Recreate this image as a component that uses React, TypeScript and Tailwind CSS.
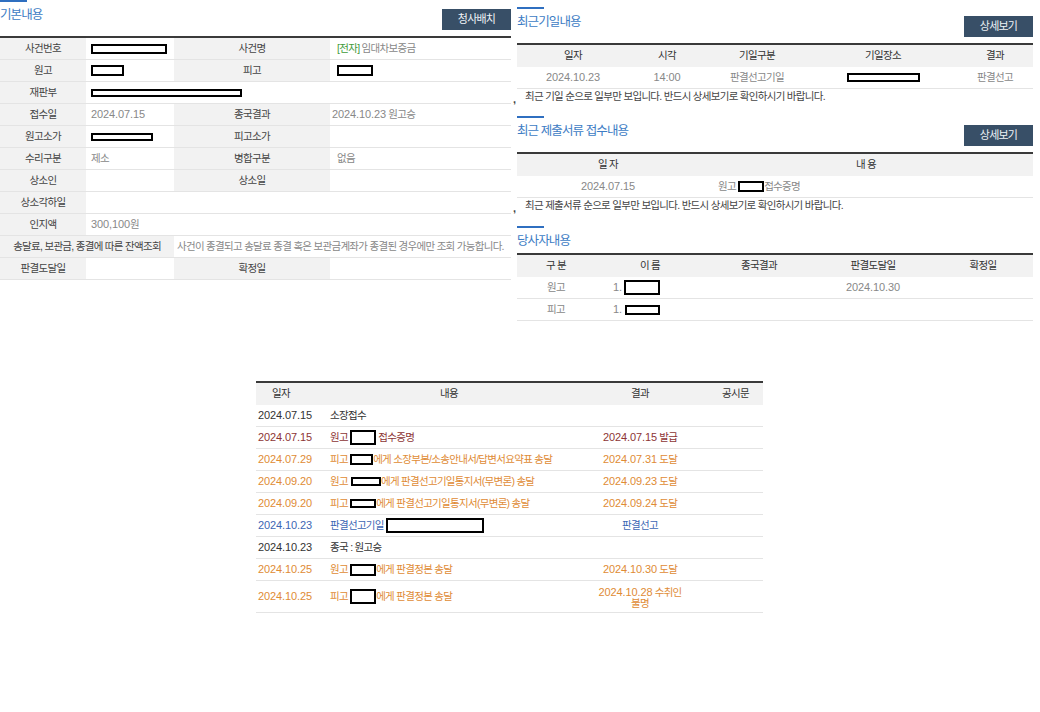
import React from 'react';

const FONT = "font-['Liberation_Sans','Noto_Sans_CJK_KR',sans-serif]";

function Num({ children }: { children: React.ReactNode }) {
  return <span className="text-[11px] tracking-[-0.1px]">{children}</span>;
}

function Redact({ className }: { className: string }) {
  return <span className={`inline-block align-middle border-2 border-black bg-white ${className}`} />;
}

function SectionHead({ title, button }: { title: string; button?: string }) {
  return (
    <div>
      <div className="w-[27px] h-[2px] bg-[#2f6fc0]" />
      <div className={`flex justify-between items-start ${button ? 'h-[34px]' : 'h-[25px]'}`}>
        <h2 className="pt-[5px] text-[12.5px] leading-[16px] tracking-[-0.9px] font-normal text-[#3d7cc4]">{title}</h2>
        {button && (
          <button className="mt-[7px] w-[69px] h-[21px] bg-[#384f67] text-[11px] tracking-[-0.8px] text-[#eef2f6]">
            {button}
          </button>
        )}
      </div>
    </div>
  );
}

function Note({ children }: { children: React.ReactNode }) {
  return (
    <div className="h-[16px] flex items-center -ml-[4px] text-[#444]">
      <span className="w-[12px] text-[11px] leading-[8px] pt-[3px] font-bold">,</span>
      <span>{children}</span>
    </div>
  );
}

const LABEL = 'bg-[#f2f2f2] flex items-center justify-center text-[#444]';
const VAL1 = 'flex items-center pl-[5px] text-[#888]';
const VAL2 = 'flex items-center pl-[7px] text-[#888]';
const ROW = 'grid grid-cols-[86px_88px_156px_181px] h-[22px] border-b border-[#e4e4e4]';

function BasicInfo() {
  return (
    <div className="w-[511px]">
      <SectionHead title="기본내용" button="청사배치" />
      <div className="border-t-2 border-[#3a3a3a]">
        <div className={ROW}>
          <div className={LABEL}>사건번호</div>
          <div className={VAL1}><Redact className="w-[76px] h-[10px]" /></div>
          <div className={LABEL}>사건명</div>
          <div className={VAL2}>
            <span className="text-[#3f9b3a]">[전자]</span>&nbsp;임대차보증금
          </div>
        </div>
        <div className={ROW}>
          <div className={LABEL}>원고</div>
          <div className={VAL1}><Redact className="w-[33px] h-[11px]" /></div>
          <div className={LABEL}>피고</div>
          <div className={VAL2}><Redact className="w-[36px] h-[11px]" /></div>
        </div>
        <div className={ROW}>
          <div className={LABEL}>재판부</div>
          <div className={`${VAL1} col-span-3`}><Redact className="w-[151px] h-[8px]" /></div>
        </div>
        <div className={ROW}>
          <div className={LABEL}>접수일</div>
          <div className={VAL1}><Num>2024.07.15</Num></div>
          <div className={LABEL}>종국결과</div>
          <div className="flex items-center pl-[2px] text-[#888]">
            <Num>2024.10.23</Num>&nbsp;원고승
          </div>
        </div>
        <div className={ROW}>
          <div className={LABEL}>원고소가</div>
          <div className={VAL1}><Redact className="w-[62px] h-[8px]" /></div>
          <div className={LABEL}>피고소가</div>
          <div className={VAL2} />
        </div>
        <div className={ROW}>
          <div className={LABEL}>수리구분</div>
          <div className={VAL1}>제소</div>
          <div className={LABEL}>병합구분</div>
          <div className={VAL2}>없음</div>
        </div>
        <div className={ROW}>
          <div className={LABEL}>상소인</div>
          <div className={VAL1} />
          <div className={LABEL}>상소일</div>
          <div className={VAL2} />
        </div>
        <div className={ROW}>
          <div className={LABEL}>상소각하일</div>
          <div className={`${VAL1} col-span-3`} />
        </div>
        <div className={ROW}>
          <div className={LABEL}>인지액</div>
          <div className={`${VAL1} col-span-3`}>
            <Num>300,100</Num>원
          </div>
        </div>
        <div className={ROW}>
          <div className={`${LABEL} col-span-2 whitespace-nowrap`}>송달료, 보관금, 종결에 따른 잔액조회</div>
          <div className="col-span-2 flex items-center pl-[3px] text-[#888] whitespace-nowrap">
            사건이 종결되고 송달료 종결 혹은 보관금계좌가 종결된 경우에만 조회 가능합니다.
          </div>
        </div>
        <div className={ROW}>
          <div className={LABEL}>판결도달일</div>
          <div className={VAL1} />
          <div className={LABEL}>확정일</div>
          <div className={VAL2} />
        </div>
      </div>
    </div>
  );
}

const HEAD = 'bg-[#f2f2f2] h-[22px] text-[#333]';
const LINE = 'h-[22px] border-b border-[#e4e4e4] text-[#888]';

function RecentDates() {
  const cols = 'grid grid-cols-[112px_76px_104px_148px_76px]';
  return (
    <div>
      <SectionHead title="최근기일내용" button="상세보기" />
      <div className="border-t-2 border-[#3a3a3a]">
        <div className={`${cols} ${HEAD} items-center text-center`}>
          <div>일자</div>
          <div>시각</div>
          <div>기일구분</div>
          <div>기일장소</div>
          <div>결과</div>
        </div>
        <div className={`${cols} ${LINE} items-center text-center`}>
          <div><Num>2024.10.23</Num></div>
          <div><Num>14:00</Num></div>
          <div>판결선고기일</div>
          <div><Redact className="w-[73px] h-[9px]" /></div>
          <div>판결선고</div>
        </div>
      </div>
      <Note>최근 기일 순으로 일부만 보입니다. 반드시 상세보기로 확인하시기 바랍니다.</Note>
    </div>
  );
}

function RecentDocs() {
  const cols = 'grid grid-cols-[182px_334px]';
  return (
    <div className="mt-[11px]">
      <SectionHead title="최근 제출서류 접수내용" button="상세보기" />
      <div className="border-t-2 border-[#3a3a3a]">
        <div className={`${cols} ${HEAD} items-center text-center`}>
          <div>일 자</div>
          <div>내 용</div>
        </div>
        <div className={`${cols} ${LINE} items-center`}>
          <div className="text-center"><Num>2024.07.15</Num></div>
          <div className="pl-[19px] whitespace-nowrap">
            원고 <Redact className="w-[26px] h-[11px]" />접수증명
          </div>
        </div>
      </div>
      <Note>최근 제출서류 순으로 일부만 보입니다. 반드시 상세보기로 확인하시기 바랍니다.</Note>
    </div>
  );
}

function Parties() {
  const cols = 'grid grid-cols-[78px_110px_108px_120px_100px]';
  return (
    <div className="mt-[12px]">
      <SectionHead title="당사자내용" />
      <div className="border-t-2 border-[#3a3a3a]">
        <div className={`${cols} ${HEAD} items-center text-center`}>
          <div>구 분</div>
          <div>이 름</div>
          <div>종국결과</div>
          <div>판결도달일</div>
          <div>확정일</div>
        </div>
        <div className={`${cols} ${LINE} items-center`}>
          <div className="text-center">원고</div>
          <div className="pl-[18px] flex items-center">
            <Num>1.</Num>
            <Redact className="ml-[2px] w-[36px] h-[15px]" />
          </div>
          <div />
          <div className="text-center"><Num>2024.10.30</Num></div>
          <div />
        </div>
        <div className={`${cols} ${LINE} items-center`}>
          <div className="text-center">피고</div>
          <div className="pl-[18px] flex items-center">
            <Num>1.</Num>
            <Redact className="ml-[3px] w-[35px] h-[10px]" />
          </div>
          <div />
          <div />
          <div />
        </div>
      </div>
    </div>
  );
}

type Tone = 'dark' | 'red' | 'orange' | 'blue';

const TONE: Record<Tone, string> = {
  dark: 'text-[#333]',
  red: 'text-[#8d3535]',
  orange: 'text-[#e08b35]',
  blue: 'text-[#3c66b4]',
};

interface HistoryRow {
  date: string;
  tone: Tone;
  content: React.ReactNode;
  result?: React.ReactNode;
  tall?: boolean;
}

const HISTORY: HistoryRow[] = [
  { date: '2024.07.15', tone: 'dark', content: '소장접수' },
  {
    date: '2024.07.15',
    tone: 'red',
    content: <>원고 <Redact className="w-[26px] h-[15px]" /> 접수증명</>,
    result: <><Num>2024.07.15</Num> 발급</>,
  },
  {
    date: '2024.07.29',
    tone: 'orange',
    content: <>피고 <Redact className="w-[23px] h-[11px]" />에게 소장부본/소송안내서/답변서요약표 송달</>,
    result: <><Num>2024.07.31</Num> 도달</>,
  },
  {
    date: '2024.09.20',
    tone: 'orange',
    content: <>원고<Redact className="ml-[3px] w-[30px] h-[9px]" />에게 판결선고기일통지서(무변론) 송달</>,
    result: <><Num>2024.09.23</Num> 도달</>,
  },
  {
    date: '2024.09.20',
    tone: 'orange',
    content: <>피고 <Redact className="w-[26px] h-[9px]" />에게 판결선고기일통지서(무변론) 송달</>,
    result: <><Num>2024.09.24</Num> 도달</>,
  },
  {
    date: '2024.10.23',
    tone: 'blue',
    content: <>판결선고기일 <Redact className="w-[98px] h-[15px]" /></>,
    result: '판결선고',
  },
  { date: '2024.10.23', tone: 'dark', content: '종국 : 원고승' },
  {
    date: '2024.10.25',
    tone: 'orange',
    content: <>원고 <Redact className="w-[26px] h-[12px]" />에게 판결정본 송달</>,
    result: <><Num>2024.10.30</Num> 도달</>,
  },
  {
    date: '2024.10.25',
    tone: 'orange',
    content: <>피고 <Redact className="w-[26px] h-[15px]" />에게 판결정본 송달</>,
    result: (
      <span className="inline-flex flex-col items-center leading-[11px]">
        <span><Num>2024.10.28</Num> 수취인</span>
        <span>불명</span>
      </span>
    ),
    tall: true,
  },
];

function History() {
  const cols = 'grid grid-cols-[72px_242px_140px_53px]';
  return (
    <div className="mt-[60px] ml-[256px] w-[507px] border-t-2 border-[#3a3a3a]">
      <div className={`${cols} ${HEAD} items-center`}>
        <div className="pl-[16px]">일자</div>
        <div className="text-center">내용</div>
        <div className="text-center">결과</div>
        <div className="pl-[12px]">공시문</div>
      </div>
      {HISTORY.map((r, i) => (
        <div
          key={i}
          className={`${cols} items-center border-b border-[#e4e4e4] ${r.tall ? 'h-[32px]' : 'h-[22px]'} ${TONE[r.tone]}`}
        >
          <div className="pl-[2px]"><Num>{r.date}</Num></div>
          <div className="pl-[2px] whitespace-nowrap">{r.content}</div>
          <div className="text-center whitespace-nowrap">{r.result}</div>
          <div />
        </div>
      ))}
    </div>
  );
}

export default function App() {
  return (
    <div className={`w-[1040px] h-[712px] overflow-hidden bg-white ${FONT} text-[10.5px] tracking-[-0.7px] text-[#555]`}>
      <div className="flex gap-[6px] items-start">
        <BasicInfo />
        <div className="w-[516px] pt-[7px]">
          <RecentDates />
          <RecentDocs />
          <Parties />
        </div>
      </div>
      <History />
    </div>
  );
}
